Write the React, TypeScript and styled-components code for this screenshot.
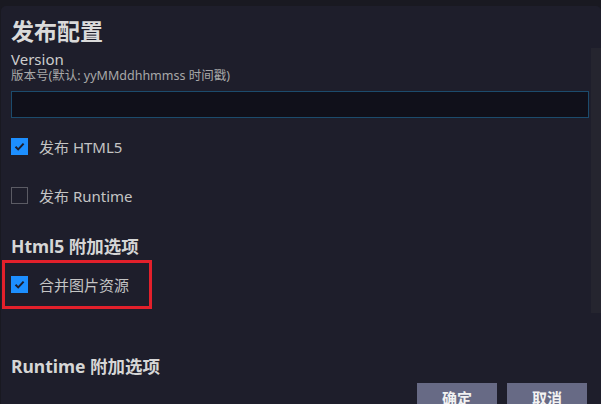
import styled, { createGlobalStyle } from "styled-components";

const GlobalStyle = createGlobalStyle`
    html, body {
        margin: 0;
        padding: 0;
        background: #1a1a23;
        overflow: hidden;
    }
    * {
        box-sizing: border-box;
    }
`;

const Page = styled.div`
    width: 601px;
    height: 404px;
    display: flex;
    flex-direction: column;
    font-family: "Noto Sans", "Noto Sans CJK SC", sans-serif;
`;

const TopStrip = styled.div`
    height: 2px;
    background: #d3d7e2;
`;

const Body = styled.div`
    flex: 1;
    display: flex;
    padding: 6px 0 0 1px;
    background: #191921;
`;

const Panel = styled.div`
    flex: 1;
    display: flex;
    background: #1e1e2b;
    border-radius: 5px 5px 0 0;
    overflow: hidden;
`;

const Content = styled.div`
    flex: 1;
    padding: 10px 2px 0 10px;
    display: flex;
    flex-direction: column;
`;

const ScrollColumn = styled.div`
    width: 10px;
    padding-top: 42px;
`;

const ScrollTrack = styled.div`
    height: 265px;
    background: #25252f;
`;

const Title = styled.h1`
    margin: 0;
    font-family: "Noto Sans CJK SC", sans-serif;
    font-size: 23px;
    line-height: 28px;
    font-weight: 700;
    color: #dadada;
`;

const FieldLabel = styled.div`
    margin-top: 6px;
    font-size: 15px;
    line-height: 18px;
    color: #cdcdcd;
`;

const FieldHint = styled.div`
    font-size: 12.5px;
    line-height: 16px;
    color: #a8a8a8;
`;

const Input = styled.input`
    margin-top: 7px;
    height: 27px;
    width: 100%;
    background: #10101a;
    border: 1px solid #1c4b6c;
    outline: none;
    color: #ddd;
    padding: 0 6px;
`;

const CheckRow = styled.label<{ $top: number }>`
    display: flex;
    align-items: center;
    gap: 11px;
    height: 17px;
    margin-top: ${(p) => p.$top}px;
    font-size: 15px;
    color: #c4c4c4;
`;

const Highlight = styled.div`
    margin: 3px 0 0 -9px;
    width: 150px;
    height: 49px;
    border: 3px solid #e3202b;
    padding: 13px 0 0 6px;
`;

const Box = styled.span<{ $checked: boolean }>`
    width: 17px;
    height: 17px;
    flex: none;
    display: flex;
    align-items: center;
    justify-content: center;
    background: ${(p) => (p.$checked ? "#1d8fff" : "transparent")};
    border: ${(p) => (p.$checked ? "none" : "1px solid #5b5b64")};
`;

const SectionTitle = styled.h2<{ $top: number }>`
    margin: ${(p) => p.$top}px 0 0;
    font-size: 17.5px;
    line-height: 22px;
    font-weight: 700;
    color: #d6d6d6;
`;

const Footer = styled.div`
    display: flex;
    justify-content: flex-end;
    gap: 10px;
    margin-top: 6px;
    padding-right: 2px;
`;

const Button = styled.button`
    width: 80px;
    height: 28px;
    border: none;
    background: #676a85;
    color: #f2f2f2;
    font-family: "Noto Sans CJK SC", sans-serif;
    font-size: 15px;
    font-weight: 700;
    padding: 0;
`;

function Check({ checked }: { checked: boolean }) {
    return (
        <Box $checked={checked}>
            {checked && (
                <svg width="13" height="13" viewBox="0 0 13 13">
                    <path d="M2.5 6.8 L5.2 9.4 L10.6 3.6" fill="none" stroke="#1e1e2b" strokeWidth="2" />
                </svg>
            )}
        </Box>
    );
}

export default function App() {
    return (
        <Page>
            <GlobalStyle />
            <TopStrip />
            <Body>
                <Panel>
                    <Content>
                        <Title>发布配置</Title>
                        <FieldLabel>Version</FieldLabel>
                        <FieldHint>版本号(默认: yyMMddhhmmss 时间戳)</FieldHint>
                        <Input />
                        <CheckRow $top={20}>
                            <Check checked />
                            发布 HTML5
                        </CheckRow>
                        <CheckRow $top={32}>
                            <Check checked={false} />
                            发布 Runtime
                        </CheckRow>
                        <SectionTitle $top={31}>Html5 附加选项</SectionTitle>
                        <Highlight>
                            <CheckRow $top={0}>
                                <Check checked />
                                合并图片资源
                            </CheckRow>
                        </Highlight>
                        <SectionTitle $top={46}>Runtime 附加选项</SectionTitle>
                        <Footer>
                            <Button>确定</Button>
                            <Button>取消</Button>
                        </Footer>
                    </Content>
                    <ScrollColumn>
                        <ScrollTrack />
                    </ScrollColumn>
                </Panel>
            </Body>
        </Page>
    );
}
